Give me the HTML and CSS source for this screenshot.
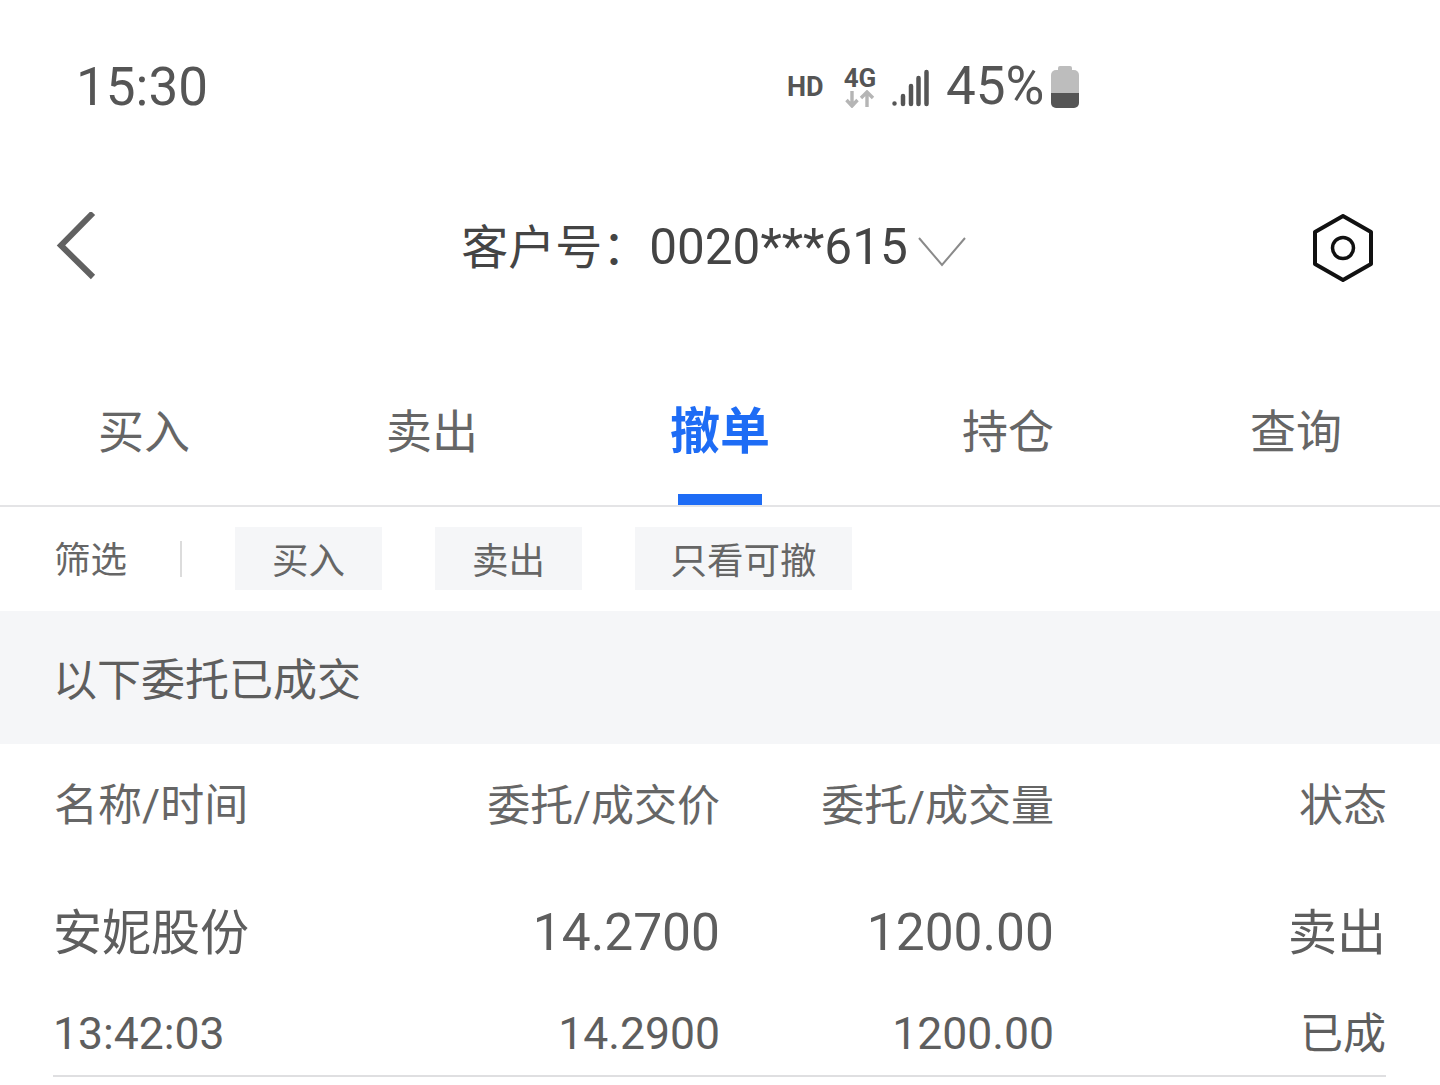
FILE: index.html
```html
<!DOCTYPE html>
<html lang="zh-CN">
<head>
<meta charset="utf-8">
<title>撤单</title>
<link rel="stylesheet" href="styles.css">
</head>
<body>
<div class="page">
  <div class="status">
    <span class="time">15:30</span>
    <div class="sys">
      <span class="hd">HD</span>
      <div class="net">
        <span class="net-label">4G</span>
        <svg class="net-arrows" width="32" height="18" viewBox="0 0 32 18"><path d="M8 1v14M2.500 10l5.500 6 5.500-6" fill="none" stroke="#b5b5b5" stroke-width="3.400"/><path d="M23 17V3M17 8l6-6 6 6" fill="none" stroke="#b5b5b5" stroke-width="3.400"/></svg>
      </div>
      <svg class="signal" width="38" height="38" viewBox="0 0 38 38"><g fill="none" stroke="#555" stroke-width="4.500" stroke-linecap="round"><path d="M2.500 34.500v.1M11 27v8M19 17v18M26.500 9v26M34.500 3v32"/></g></svg>
      <span class="pct">45%</span>
      <svg class="batt" width="28" height="42" viewBox="0 0 28 42"><path d="M9 0h10a2 2 0 0 1 2 2v2H7V2a2 2 0 0 1 2-2z" fill="#bdbdbd"/><path d="M0 9a5 5 0 0 1 5-5h18a5 5 0 0 1 5 5v18H0z" fill="#bdbdbd"/><path d="M0 27h28v10a5 5 0 0 1-5 5H5a5 5 0 0 1-5-5z" fill="#555"/></svg>
    </div>
  </div>

  <header class="head">
    <svg class="back" width="40" height="68" viewBox="0 0 40 68"><path d="M37 1L5 33.500 37 65" fill="none" stroke="#616161" stroke-width="6"/></svg>
    <div class="account">
      <span class="acc-text">客户号：<span class="acc-num">0020***615</span></span>
      <svg class="chev" width="48" height="30" viewBox="0 0 48 30"><path d="M1 1l23 27L47 1" fill="none" stroke="#8a8a8a" stroke-width="2"/></svg>
    </div>
    <svg class="gear" width="62" height="68" viewBox="0 0 62 68"><path d="M31 2l28 16v32L31 66 3 50V18z" fill="none" stroke="#111" stroke-width="4" stroke-linejoin="round"/><circle cx="31" cy="34" r="10.500" fill="none" stroke="#111" stroke-width="3.500"/></svg>
  </header>

  <nav class="tabs">
    <a class="tab">买入</a>
    <a class="tab">卖出</a>
    <a class="tab tab-active">撤单</a>
    <a class="tab">持仓</a>
    <a class="tab">查询</a>
  </nav>

  <div class="filter">
    <span class="filter-label">筛选</span>
    <span class="filter-sep"></span>
    <span class="chip">买入</span>
    <span class="chip">卖出</span>
    <span class="chip chip-wide">只看可撤</span>
  </div>

  <div class="banner">以下委托已成交</div>

  <div class="table">
    <div class="thead">
      <span>名称/时间</span>
      <span class="r col">委托/成交价</span>
      <span class="r col">委托/成交量</span>
      <span class="r">状态</span>
    </div>
    <div class="row">
      <div class="line1">
        <span>安妮股份</span>
        <span class="r num">14.2700</span>
        <span class="r num">1200.00</span>
        <span class="r">卖出</span>
      </div>
      <div class="line2">
        <span class="num">13:42:03</span>
        <span class="r num">14.2900</span>
        <span class="r num">1200.00</span>
        <span class="r cn">已成</span>
      </div>
    </div>
  </div>
</div>
</body>
</html>
```
FILE: styles.css
```css
* { box-sizing: border-box; }
html, body { margin: 0; padding: 0; background: #fff; }
body {
  font-family: Roboto, "Noto Sans CJK SC", sans-serif;
  color: #5e5e5e;
}
.page { width: 1440px; height: 1085px; overflow: hidden; }

.status {
  height: 175px;
  display: flex;
  align-items: center;
  padding-left: 76px;
}
.time { font-size: 53px; color: #555; line-height: 1; }
.sys { margin-left: 580px; display: flex; align-items: center; margin-top: -2px; }
.hd { font-size: 27px; font-weight: 700; color: #555; width: 56px; margin-left: -1px; }
.net { display: flex; flex-direction: column; align-items: center; width: 36px; line-height: 1; }
.net-label { font-size: 26px; font-weight: 700; color: #555; line-height: 24px; margin-left: -2px; }
.net-arrows { display: block; margin-left: -2px; }
.signal { margin-left: 13px; margin-top: 2px; }
.pct { font-size: 53px; color: #555; margin-left: 16px; line-height: 1; }
.batt { margin-left: 7px; }

.head {
  height: 146px;
  display: flex;
  align-items: center;
  padding: 0 66px 0 56px;
  justify-content: space-between;
}
.back { margin-bottom: 4px; }
.account { display: flex; align-items: center; gap: 10px; margin-left: 19px; }
.acc-text { font-size: 47px; color: #444; line-height: 1; }
.acc-num { font-size: 49.500px; }
.chev { margin-top: 8px; }

.tabs {
  height: 186px;
  display: grid;
  grid-template-columns: repeat(5, 288px);
  border-bottom: 2px solid #e4e4e6;
}
.tab {
  display: flex;
  align-items: flex-end;
  justify-content: center;
  font-size: 46px;
  color: #666;
  line-height: 1;
  padding-bottom: 50px;
  position: relative;
}
.tab-active { color: #1e6cf5; font-weight: 700; font-size: 50px; padding-bottom: 48px; }
.tab-active::after {
  content: "";
  position: absolute;
  left: 102px;
  bottom: 0;
  width: 84px;
  height: 11px;
  background: #1e6cf5;
}

.filter {
  height: 104px;
  display: flex;
  align-items: center;
  padding: 0 0 0 54px;
  font-size: 36.500px;
  color: #666;
}
.filter-label { width: 126px; line-height: 1; padding-top: 5px; }
.filter-sep { width: 2px; height: 36px; background: #dcdcdc; margin-right: 53px; }
.chip {
  width: 147px;
  height: 63px;
  padding-top: 7px;
  margin: 0 53px 1px 0;
  background: #f5f6f8;
  display: flex;
  align-items: center;
  justify-content: center;
  line-height: 1;
}
.chip-wide { width: 217px; }

.banner {
  height: 133px;
  background: #f5f6f8;
  display: flex;
  align-items: center;
  padding: 6px 0 0 53px;
  font-size: 44px;
  color: #5e5e5e;
  line-height: 1;
}

.table { padding: 0 54px; }
.thead, .line1, .line2 {
  display: grid;
  grid-template-columns: 347px 319px 334px 333px;
  align-items: center;
  line-height: 1;
}
.thead { height: 124px; font-size: 44px; color: #666; }
.thead .col { font-size: 43px; }
.line1 { height: 64px; font-size: 49px; }
.line1 .num { font-size: 51.500px; }
.line2 { height: 81px; margin-top: 29px; font-size: 44.500px; }
.line2 .cn { font-size: 43px; }
.r { text-align: right; }
.r.num { margin-right: -1px; }
.row { padding-top: 33px; border-bottom: 2px solid #dfdfe1; margin-left: -1px; }
```
